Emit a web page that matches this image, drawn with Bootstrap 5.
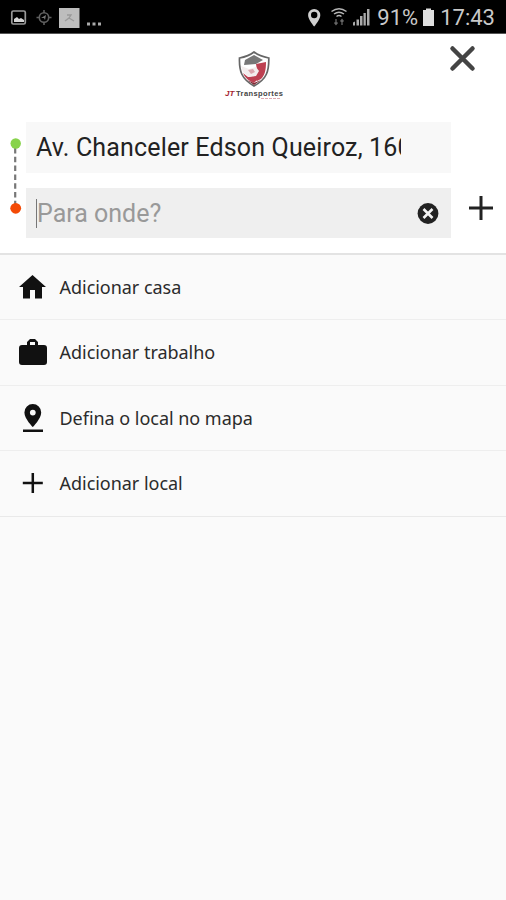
<!DOCTYPE html>
<html lang="pt-BR">
<head>
<meta charset="utf-8">
<meta name="viewport" content="width=device-width, initial-scale=1">
<title>JT Transportes</title>
<link href="https://cdn.jsdelivr.net/npm/bootstrap@5.3.0/dist/css/bootstrap.min.css" rel="stylesheet">
<style>
body{font-family:Roboto,sans-serif;background:#fafafa;height:900px;overflow:hidden}
svg{display:block;flex:none}
.status{height:34px;background:#000;color:#c9c9c9;font-size:22px;line-height:34px;border-bottom:1px solid #555}
.status span{padding-top:2px}
.top{height:221px;background:#fff;border-bottom:2px solid #e3e3e3}
.brand{height:88px;padding-left:220px;padding-right:30px}
.brand .logo{margin-top:12px}
.brand button{margin-top:11px}
.rail{width:26px;padding-left:9px;padding-top:15px}
.fields{width:425px}
.field{height:51px;background:#f8f8f8;padding:0 12px 0 10px;font-size:25px;line-height:52px;color:#222}
.field.active{height:50px;background:#efefef;margin-top:15px}
.address{width:365px;overflow:hidden;white-space:nowrap;letter-spacing:.16px}
.caret{width:1px;height:29px;background:#777}
.hint{color:#999;padding-top:1px}
.options .list-group-item{height:65.4px;padding:0 0 0 18px;background:#fafafa;border-color:#eee;color:#2b2b2b;font:18px/1 "Noto Sans",sans-serif;letter-spacing:-.03px}
.options.list-group{border-bottom:1px solid #e9e9e9;height:262px}
.options span{margin-left:11.500px;white-space:nowrap}
</style>
<script src="https://cdn.jsdelivr.net/npm/bootstrap@5.3.0/dist/js/bootstrap.bundle.min.js"></script>
</head>
<body>
<div class="status d-flex justify-content-between align-items-center">
  <div class="d-flex align-items-center">
    <svg width="110" height="33" viewBox="0 0 110 33">
      <rect x="11.8" y="11" width="13.5" height="13" rx="1.5" fill="none" stroke="#999" stroke-width="1.7"/>
      <path d="M14 22v-3l3-2 2 2 2-1 3 2v2z" fill="#d5d5d5"/>
      <g stroke="#606060" fill="none" stroke-width="1.6"><circle cx="44" cy="17.500" r="4.700"/><path d="M44 10v3M44 22v3M36.500 17.500h3M48.500 17.500h3"/></g>
      <path d="m41 18 5-3-1 5-1-2z" fill="#777"/>
      <rect x="59" y="8" width="20.500" height="20" fill="#bdbdbd"/>
      <path d="M67 15h4l-2 3-4 3M69 18l5 3" fill="none" stroke="#999" stroke-width="1.300"/>
      <path d="M87 22.500h3v3h-3zM92.500 22.500h3v3h-3zM98 22.500h3v3h-3z" fill="#aaa"/>
    </svg>
  </div>
  <div class="d-flex align-items-center">
    <svg width="70" height="33" viewBox="0 0 70 33">
      <path fill-rule="evenodd" d="M14.200 9a6.100 6.100 0 0 0-6.100 6.200c0 4.200 6.100 11.300 6.100 11.300s6.100-7.100 6.100-11.300A6.100 6.100 0 0 0 14.200 9zm0 2.800a3.200 3.200 0 1 1 0 6.400 3.200 3.200 0 0 1 0-6.400z" fill="#d0d0d0"/>
      <g fill="none" stroke="#b5b5b5" stroke-width="1.500"><path d="M31.500 11.500q7.500-5.500 15 0M34 14q5-3.500 10 0M36.500 16.500q2.500-1.800 5 0"/></g>
      <path d="M36 19v5M34.500 22.500l1.500 2 1.500-2M42 25v-5M40.500 21.500l1.500-2 1.500 2" stroke="#666" fill="none" stroke-width="1.300"/>
      <path d="M53 25.500v-3l2-1v4zM56.500 25.500v-6h2.500v6zM60 25.500v-9.500h2.500v9.500zM63.500 25.500v-12.500h2.300v12.500zM67 25.500v-16.500h2.500v16.500z" fill="#aaa"/>
    </svg>
    <span style="margin-left:7px">91%</span>
    <svg style="margin-left:3px" width="14" height="33" viewBox="0 0 14 33"><path d="M5 8.500h5V10h3v16H2V10h3z" fill="#dedede"/></svg>
    <span style="margin:0 11px 0 5px">17:43</span>
  </div>
</div>

<header class="top">
  <div class="brand d-flex justify-content-between align-items-start">
    <svg class="logo" width="70" height="60" viewBox="0 0 70 60">
      <path d="M34 6C29 10 25 11 19.500 12c-.5 13 2 21 14.500 28 13-7 15-15 14.800-28C43 11 39 10 34 6z" fill="#fff" stroke="#666" stroke-width="1.700"/>
      <path d="m25 14 9-5 9 5-7 4-12 1z" fill="#777"/>
      <path d="m36 18 10-2c0 8-1 13-5 17l-4 2-4-5 4-6z" fill="#bd4051"/>
      <path d="m23 27 5 4 5-1 5 3-4 4c-5-2-9-5-11-10z" fill="#bd4051"/>
      <path d="m21 20 8 3 7-2 3 4-3 5-7 1-6-5z" fill="#f3eded"/>
      <path d="m28 24 5-1 2 3-4 2z" fill="#dca6ad"/>
      <path d="m27 34 7 3 7-3-7 5z" fill="#7e2934"/>
      <text x="5" y="50" font-family="Liberation Sans,sans-serif" font-weight="700" font-style="italic" font-size="8" fill="#a51e30">JT</text>
      <text x="16" y="50" font-family="Liberation Sans,sans-serif" font-weight="700" font-size="7.500" fill="#444" textLength="47">Transportes</text>
      <path d="M41 52.500h19" stroke="#dda8af" stroke-dasharray="3 1"/>
    </svg>
    <button type="button" class="btn p-0 border-0" aria-label="Fechar">
      <svg width="27" height="27" viewBox="0 0 27 27"><path d="m3.500 3.500 20 20M23.500 3.500l-20 20" stroke="#444" stroke-width="4.500" stroke-linecap="round"/></svg>
    </button>
  </div>
  <div class="d-flex align-items-start">
    <div class="rail">
      <svg width="14" height="78" viewBox="0 0 14 78"><path d="M6.200 11v56" stroke="#777" stroke-width="2.200" stroke-dasharray="5.500 3.300"/><circle cx="6.700" cy="6.500" r="5.200" fill="#88d34c"/><circle cx="6.700" cy="71.300" r="5.400" fill="#f44a06"/></svg>
    </div>
    <div class="fields">
      <div class="field"><div class="address">Av. Chanceler Edson Queiroz, 1600</div></div>
      <div class="field active d-flex align-items-center">
        <span class="caret"></span><span class="hint">Para onde?</span>
        <svg class="ms-auto" width="22" height="22" viewBox="0 0 22 22"><circle cx="11" cy="11.500" r="10.400" fill="#222"/><path d="m6.500 7 9 9M15.500 7l-9 9" stroke="#f3f3f3" stroke-width="2.600"/></svg>
      </div>
    </div>
    <button type="button" class="btn p-0 border-0" style="margin:74px 0 0 18px" aria-label="Adicionar parada">
      <svg width="24" height="24" viewBox="0 0 24 24"><path d="M12 0v24M0 12h24" stroke="#222" stroke-width="3"/></svg>
    </button>
  </div>
</header>

<div class="options list-group list-group-flush">
  <a class="list-group-item d-flex align-items-center"><svg width="30" height="30" viewBox="0 0 30 30"><path d="M14.500 3 1 15h4v11.500h7V18h5v8.500h7V15h4z" fill="#111"/></svg><span>Adicionar casa</span></a>
  <a class="list-group-item d-flex align-items-center"><svg width="30" height="30" viewBox="0 0 30 30"><path fill-rule="evenodd" d="M12 2h5l3 3v3h6q3 0 3 3v14q0 3-3 3H4q-3 0-3-3V11q0-3 3-3h5V5zm0 3v3h5V5z" fill="#111"/></svg><span>Adicionar trabalho</span></a>
  <a class="list-group-item d-flex align-items-center"><svg width="30" height="30" viewBox="0 0 30 30"><path fill-rule="evenodd" d="M14.800 1a8.400 8.400 0 0 0-8.400 8.400c0 6.200 8.400 14.600 8.400 14.600s8.400-8.400 8.400-14.600A8.400 8.400 0 0 0 14.800 1zm0 5.700a2.900 2.900 0 1 1 0 5.800 2.900 2.900 0 0 1 0-5.800zM5 26.500h20v2.500H5z" fill="#111"/></svg><span>Defina o local no mapa</span></a>
  <a class="list-group-item d-flex align-items-center"><svg width="30" height="30" viewBox="0 0 30 30"><path d="M14.800 5v20M4.800 15h20" stroke="#111" stroke-width="2.500"/></svg><span>Adicionar local</span></a>
</div>
</body>
</html>
